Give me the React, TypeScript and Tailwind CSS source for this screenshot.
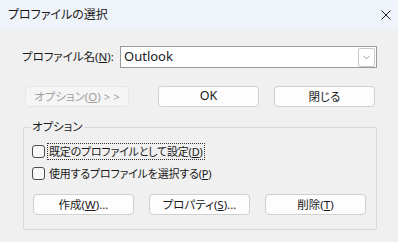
import { ChevronDown } from "lucide-react";
import type { ReactNode } from "react";

const font =
  "font-['Noto_Sans','Noto_Sans_CJK_JP',sans-serif] [font-feature-settings:'palt']";

function Btn({
  children,
  className = "",
}: {
  children: ReactNode;
  className?: string;
}) {
  return (
    <button
      className={`flex h-[21px] w-[101px] items-center justify-center rounded-[4px] border border-[#d0d0d0] bg-[#fdfdfd] text-[11.5px] leading-none text-[#1a1a1a] ${className}`}
    >
      {children}
    </button>
  );
}

function Check({ children, focused }: { children: ReactNode; focused?: boolean }) {
  return (
    <div className="flex h-[17px] items-center">
      <span className="h-[13px] w-[13px] rounded-[3px] border border-[#4d4d4d] bg-[#f8f8f8]" />
      <span
        className={`ml-[2px] flex h-[17px] items-center px-[1px] text-[11px] leading-none tracking-[-0.2px] text-[#1a1a1a] ${
          focused ? "border border-dotted border-[#333]" : "border border-transparent"
        }`}
      >
        {children}
      </span>
    </div>
  );
}

export default function App() {
  return (
    <div className={`flex h-[242px] w-[398px] flex-col bg-[#f0f0f0] ${font}`}>
      <div className="flex h-[30px] shrink-0 items-center justify-between bg-[#eef4f9] pl-[8px] pr-[7px]">
        <span className="text-[12px] text-[#1a1a1a]">プロファイルの選択</span>
        <svg width="10" height="10" viewBox="0 0 10 10" className="text-[#222]">
          <path d="M0.5 0.5 L9.5 9.5 M9.5 0.5 L0.5 9.5" stroke="currentColor" strokeWidth="1" />
        </svg>
      </div>

      <div className="mt-[16px] flex items-center pl-[22px]">
        <span className="w-[98px] text-[11.5px] text-[#1a1a1a]">
          プロファイル名(<span className="underline">N</span>):
        </span>
        <div className="flex h-[22px] w-[257px] items-center justify-between border border-[#9a9a9a] bg-white pl-[3px] pr-[1px]">
          <span className="text-[13px] text-[#1a1a1a]">Outlook</span>
          <span className="flex h-[19px] w-[17px] items-center justify-center rounded-[2px] border border-[#c8c8c8] bg-white">
            <ChevronDown className="h-[11px] w-[11px] text-[#555]" strokeWidth={1.2} />
          </span>
        </div>
      </div>

      <div className="mt-[18px] flex items-center pl-[25px]">
        <button className="flex h-[21px] w-[104px] items-center justify-center rounded-[4px] border border-[#e6e6e6] bg-[#f5f5f5] text-[11.5px] leading-none text-[#a0a0a0]">
          オプション(<span className="underline">O</span>) &gt; &gt;
        </button>
        <Btn className="ml-[29px] border-[#0067c0] text-[12.5px]">OK</Btn>
        <Btn className="ml-[15px]">閉じる</Btn>
      </div>

      <fieldset className="ml-[23px] mt-[12px] w-[354px] rounded-[1px] border border-[#d9d9d9] pb-[14px] pl-[8px]">
        <legend className="-ml-[1px] px-[1px] text-[11.5px] leading-[16px] text-[#1a1a1a]">
          オプション
        </legend>
        <div className="mt-[8px]">
          <Check focused>
            既定のプロファイルとして設定(<span className="underline">D</span>)
          </Check>
        </div>
        <div className="mt-[5px]">
          <Check>
            使用するプロファイルを選択する(<span className="underline">P</span>)
          </Check>
        </div>
        <div className="mt-[12px] flex gap-[15px] pl-[1px]">
          <Btn>
            作成(<span className="underline">W</span>)...
          </Btn>
          <Btn>
            プロパティ(<span className="underline">S</span>)...
          </Btn>
          <Btn>
            削除(<span className="underline">T</span>)
          </Btn>
        </div>
      </fieldset>
    </div>
  );
}
